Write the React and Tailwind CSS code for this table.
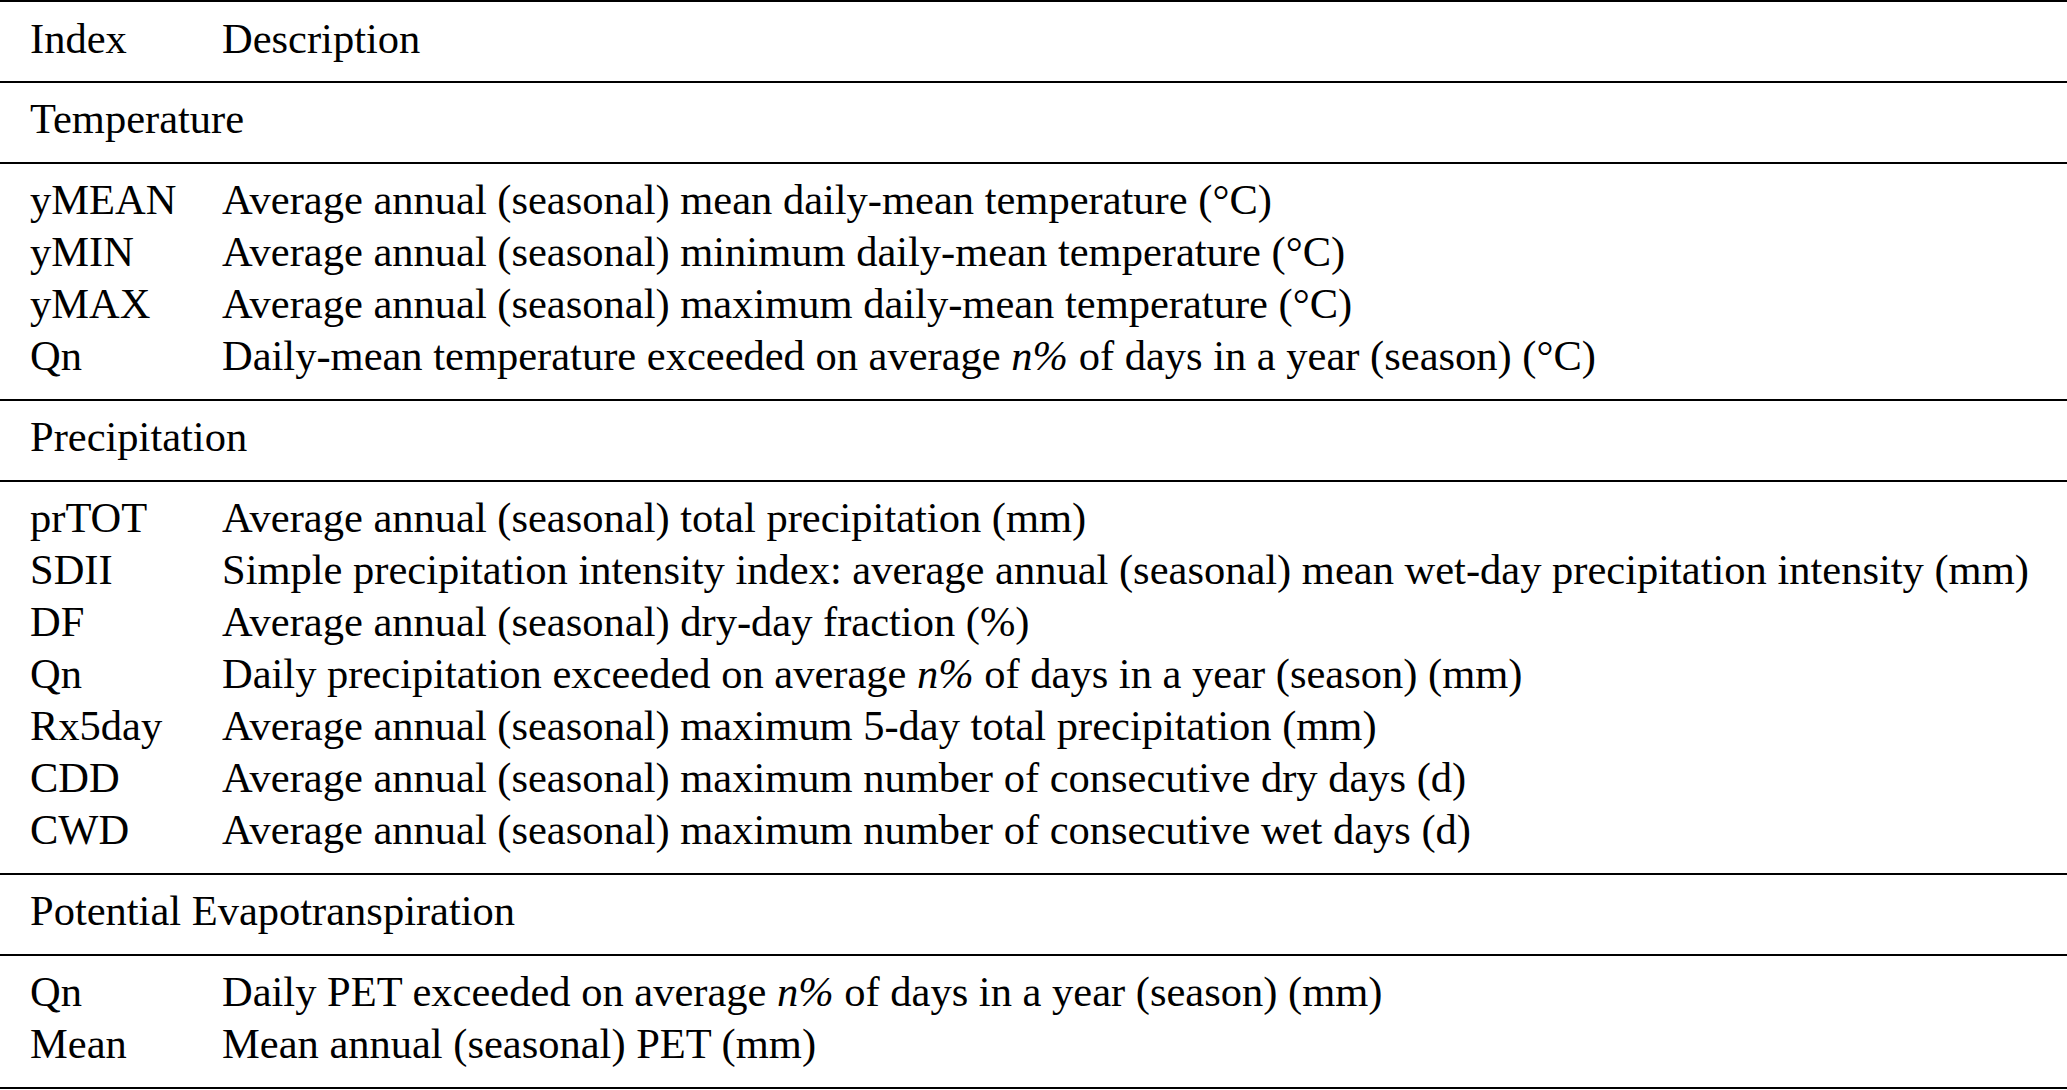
import React from 'react';

const sections = [
  {
    title: 'Temperature',
    rows: [
      ['yMEAN', <>Average annual (seasonal) mean daily-mean temperature (°C)</>],
      ['yMIN', <>Average annual (seasonal) minimum daily-mean temperature (°C)</>],
      ['yMAX', <>Average annual (seasonal) maximum daily-mean temperature (°C)</>],
      ['Qn', <>Daily-mean temperature exceeded on average <i>n%</i> of days in a year (season) (°C)</>],
    ],
  },
  {
    title: 'Precipitation',
    rows: [
      ['prTOT', <>Average annual (seasonal) total precipitation (mm)</>],
      ['SDII', <>Simple precipitation intensity index: average annual (seasonal) mean wet-day precipitation intensity (mm)</>],
      ['DF', <>Average annual (seasonal) dry-day fraction (%)</>],
      ['Qn', <>Daily precipitation exceeded on average <i>n%</i> of days in a year (season) (mm)</>],
      ['Rx5day', <>Average annual (seasonal) maximum 5-day total precipitation (mm)</>],
      ['CDD', <>Average annual (seasonal) maximum number of consecutive dry days (d)</>],
      ['CWD', <>Average annual (seasonal) maximum number of consecutive wet days (d)</>],
    ],
  },
  {
    title: 'Potential Evapotranspiration',
    rows: [
      ['Qn', <>Daily PET exceeded on average <i>n%</i> of days in a year (season) (mm)</>],
      ['Mean', <>Mean annual (seasonal) PET (mm)</>],
    ],
  },
];

function Row({ index, children }) {
  return (
    <div className="flex h-[52px] items-center">
      <div className="w-[222px] shrink-0 pl-[30px]">{index}</div>
      <div className="whitespace-nowrap">{children}</div>
    </div>
  );
}

export default function App() {
  return (
    <div
      className="w-[2067px] h-[1090px] bg-white text-black text-[42.5px] leading-[52px] overflow-hidden"
      style={{ fontFamily: '"Liberation Serif", "Times New Roman", serif' }}
    >
      <div className="border-t-2 border-black" />

      {/* Header */}
      <div className="h-[79px] pt-[11px] flex">
        <div className="w-[222px] shrink-0 pl-[30px]">Index</div>
        <div>Description</div>
      </div>

      {sections.map((s) => (
        <div key={s.title}>
          <div className="border-t-2 border-black" />
          <div className="h-[79px] pt-[10px] pl-[30px]">{s.title}</div>
          <div className="border-t-2 border-black" />
          <div className="pt-[10px] pb-[17px]">
            {s.rows.map(([idx, desc], i) => (
              <Row key={i} index={idx}>{desc}</Row>
            ))}
          </div>
        </div>
      ))}

      <div className="border-t-2 border-black" />
    </div>
  );
}
